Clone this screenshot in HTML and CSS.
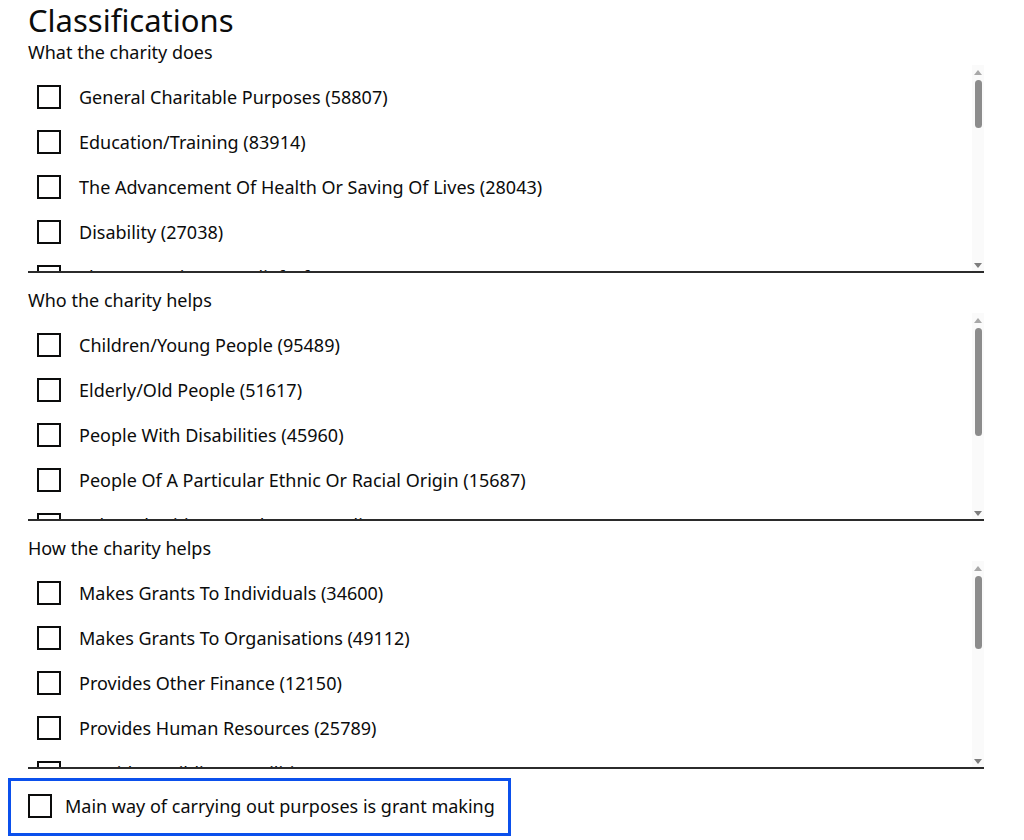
FILE: index.html
```html
<!DOCTYPE html>
<html lang="en">
<head>
<meta charset="utf-8">
<title>Classifications</title>
<link rel="stylesheet" href="styles.css">
</head>
<body>
<div class="page">
  <h2 class="title">Classifications</h2>

  <fieldset class="group group--first">
    <legend class="group-label">What the charity does</legend>
    <div class="box">
      <div class="list">
        <label class="item"><span class="check"></span><span class="text">General Charitable Purposes (58807)</span></label>
        <label class="item"><span class="check"></span><span class="text">Education/Training (83914)</span></label>
        <label class="item"><span class="check"></span><span class="text">The Advancement Of Health Or Saving Of Lives (28043)</span></label>
        <label class="item"><span class="check"></span><span class="text">Disability (27038)</span></label>
        <label class="item"><span class="check"></span><span class="text">The Prevention Or Relief Of Poverty (34190)</span></label>
        <label class="item"><span class="check"></span><span class="text">Overseas Aid/Famine Relief (8421)</span></label>
        <label class="item"><span class="check"></span><span class="text">Accommodation/Housing (12077)</span></label>
        <label class="item"><span class="check"></span><span class="text">Religious Activities (33515)</span></label>
      </div>
      <div class="scrollbar">
        <span class="arrow arrow--up"></span>
        <span class="thumb thumb--a"></span>
        <span class="arrow arrow--down"></span>
      </div>
    </div>
  </fieldset>

  <fieldset class="group">
    <legend class="group-label">Who the charity helps</legend>
    <div class="box">
      <div class="list">
        <label class="item"><span class="check"></span><span class="text">Children/Young People (95489)</span></label>
        <label class="item"><span class="check"></span><span class="text">Elderly/Old People (51617)</span></label>
        <label class="item"><span class="check"></span><span class="text">People With Disabilities (45960)</span></label>
        <label class="item"><span class="check"></span><span class="text">People Of A Particular Ethnic Or Racial Origin (15687)</span></label>
        <label class="item"><span class="check"></span><span class="text">Other Charities Or Voluntary Bodies (18066)</span></label>
        <label class="item"><span class="check"></span><span class="text">Other Defined Groups (30112)</span></label>
      </div>
      <div class="scrollbar">
        <span class="arrow arrow--up"></span>
        <span class="thumb thumb--b"></span>
        <span class="arrow arrow--down"></span>
      </div>
    </div>
  </fieldset>

  <fieldset class="group">
    <legend class="group-label">How the charity helps</legend>
    <div class="box">
      <div class="list">
        <label class="item"><span class="check"></span><span class="text">Makes Grants To Individuals (34600)</span></label>
        <label class="item"><span class="check"></span><span class="text">Makes Grants To Organisations (49112)</span></label>
        <label class="item"><span class="check"></span><span class="text">Provides Other Finance (12150)</span></label>
        <label class="item"><span class="check"></span><span class="text">Provides Human Resources (25789)</span></label>
        <label class="item"><span class="check"></span><span class="text">Provides Buildings/Facilities/Open Space (24575)</span></label>
        <label class="item"><span class="check"></span><span class="text">Provides Services (70413)</span></label>
      </div>
      <div class="scrollbar">
        <span class="arrow arrow--up"></span>
        <span class="thumb thumb--c"></span>
        <span class="arrow arrow--down"></span>
      </div>
    </div>
  </fieldset>

  <label class="focus-item"><span class="check"></span><span class="text">Main way of carrying out purposes is grant making</span></label>
</div>
</body>
</html>
```

FILE: styles.css
```css
html, body {
  margin: 0;
  padding: 0;
  background: #ffffff;
}

body {
  font-family: "Noto Sans", "Liberation Sans", Arial, sans-serif;
  color: #0b0c0c;
}

.page {
  padding-left: 28px;
  width: 956px;
}

.title {
  margin: 0;
  font-size: 31px;
  font-weight: 400;
  line-height: 40px;
}

.group {
  border: 0;
  margin: 0;
  padding: 15px 0 0 0;
  min-width: 0;
}

.group--first {
  padding-top: 0;
}

.group-label {
  padding: 0;
  font-size: 18px;
  line-height: 25px;
  float: left;
  width: 100%;
}

.box {
  clear: both;
  display: flex;
  height: 206px;
  border-bottom: 2px solid #2b2b2b;
}

.list {
  flex: 1;
  overflow: hidden;
  padding-top: 9px;
  padding-left: 9px;
}

.item {
  display: flex;
  align-items: center;
  height: 45px;
}

.check {
  flex: none;
  box-sizing: border-box;
  width: 24px;
  height: 24px;
  border: 2px solid #0b0c0c;
  background: #ffffff;
}

.text {
  font-size: 18px;
  line-height: 24px;
  margin-left: 18px;
  white-space: nowrap;
}

.scrollbar {
  flex: none;
  width: 12px;
  background: #fafafa;
  display: flex;
  flex-direction: column;
  align-items: center;
}

.arrow {
  width: 0;
  height: 0;
  border-left: 4px solid transparent;
  border-right: 4px solid transparent;
}

.arrow--up {
  margin-top: 5px;
  border-bottom: 5px solid #a8a8a8;
}

.arrow--down {
  margin-top: auto;
  margin-bottom: 3px;
  border-top: 5px solid #7d7d7d;
}

.thumb {
  width: 7px;
  margin-top: 5px;
  border-radius: 4px;
  background: #8c8c8c;
}

.thumb--a { height: 48px; }
.thumb--b { height: 108px; }
.thumb--c { height: 73px; }

.focus-item {
  display: inline-flex;
  align-items: center;
  margin: 9px 0 0 -20px;
  padding: 13px 13px 15px 17px;
  border: 3px solid #0b50ec;
}

.focus-item .text {
  margin-left: 13px;
}
```
